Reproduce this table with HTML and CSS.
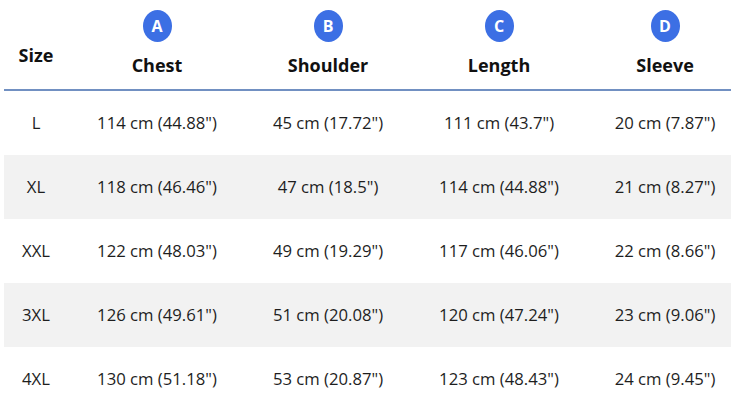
FILE: index.html
```html
<!DOCTYPE html>
<html lang="en">
<head>
<meta charset="utf-8">
<title>Size chart</title>
<link rel="stylesheet" href="styles.css">
</head>
<body>
<div class="chart">
  <div class="row head">
    <div class="cell size-h">Size</div>
    <div class="cell"><span class="badge">A</span><span class="label">Chest</span></div>
    <div class="cell"><span class="badge">B</span><span class="label">Shoulder</span></div>
    <div class="cell"><span class="badge">C</span><span class="label">Length</span></div>
    <div class="cell"><span class="badge">D</span><span class="label">Sleeve</span></div>
  </div>
  <div class="row">
    <div class="cell">L</div><div class="cell">114 cm (44.88")</div><div class="cell">45 cm (17.72")</div><div class="cell">111 cm (43.7")</div><div class="cell">20 cm (7.87")</div>
  </div>
  <div class="row alt">
    <div class="cell">XL</div><div class="cell">118 cm (46.46")</div><div class="cell">47 cm (18.5")</div><div class="cell">114 cm (44.88")</div><div class="cell">21 cm (8.27")</div>
  </div>
  <div class="row">
    <div class="cell">XXL</div><div class="cell">122 cm (48.03")</div><div class="cell">49 cm (19.29")</div><div class="cell">117 cm (46.06")</div><div class="cell">22 cm (8.66")</div>
  </div>
  <div class="row alt">
    <div class="cell">3XL</div><div class="cell">126 cm (49.61")</div><div class="cell">51 cm (20.08")</div><div class="cell">120 cm (47.24")</div><div class="cell">23 cm (9.06")</div>
  </div>
  <div class="row">
    <div class="cell">4XL</div><div class="cell">130 cm (51.18")</div><div class="cell">53 cm (20.87")</div><div class="cell">123 cm (48.43")</div><div class="cell">24 cm (9.45")</div>
  </div>
</div>
</body>
</html>
```
FILE: styles.css
```css
html, body {
  margin: 0;
  padding: 0;
  overflow: hidden;
  background: #ffffff;
}
body {
  font-family: "Open Sans", "Noto Sans", sans-serif;
  color: #1e1e1e;
}
.chart {
  margin-left: 4px;
  width: 738px;
}
.row {
  display: grid;
  grid-template-columns: 64px 178px 164px 178px 154px;
  height: 64px;
  align-items: center;
  font-size: 16.7px;
  line-height: 22px;
}
.row.alt {
  background: #f2f2f2;
}
.cell {
  text-align: center;
  white-space: nowrap;
}
.row.head {
  height: 89px;
  align-items: start;
  border-bottom: 2px solid #7190c2;
  font-size: 18px;
  line-height: 24px;
  font-weight: 700;
  color: #111111;
}
.head .cell {
  display: flex;
  flex-direction: column;
  align-items: center;
  padding-top: 10px;
}
.head .size-h {
  padding-top: 43px;
}
.badge {
  width: 29px;
  height: 32px;
  border-radius: 50%;
  background: #3c6fe4;
  color: #ffffff;
  font-size: 16px;
  line-height: 32px;
  font-weight: 700;
  text-align: center;
}
.label {
  margin-top: 11px;
}
```
